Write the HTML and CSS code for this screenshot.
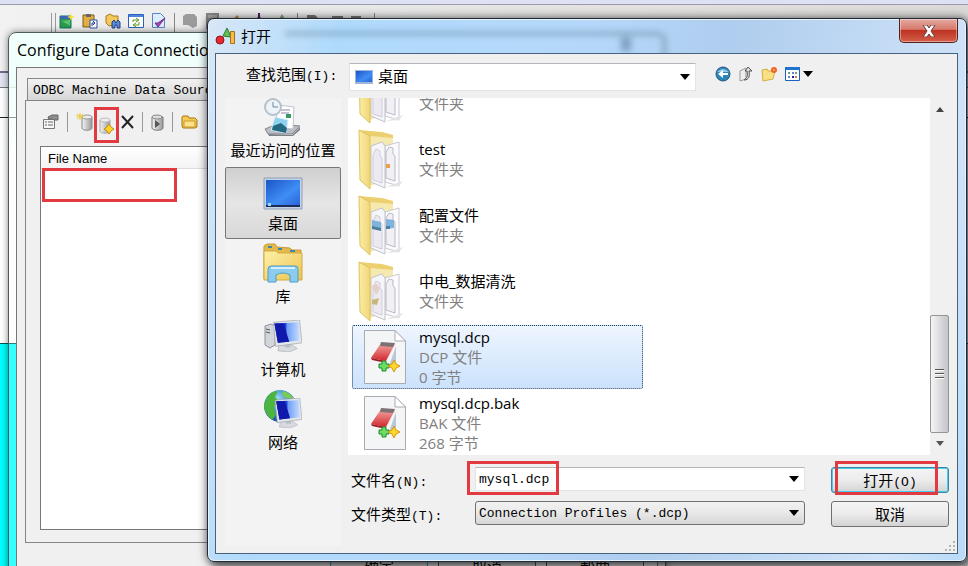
FILE: index.html
```
<!DOCTYPE html>
<html lang="zh-CN">

<head>
  <meta charset="utf-8" />
  <title>打开</title>
  <link rel="stylesheet" href="styles.css">
</head>

<body>
  <svg width="0" height="0" class="defs">
    <defs>
      <linearGradient id="gYellow" x1="0" y1="0" x2="1" y2="1">
        <stop offset="0" stop-color="#fff2ab" />
        <stop offset="1" stop-color="#ebc34e" />
      </linearGradient>
      <linearGradient id="gFlap" x1="0" y1="0" x2="1" y2="0">
        <stop offset="0" stop-color="#fbeea6" />
        <stop offset="1" stop-color="#f0d678" />
      </linearGradient>
      <linearGradient id="gBlue" x1="0" y1="0" x2="1" y2="1">
        <stop offset="0" stop-color="#1b55c8" />
        <stop offset=".6" stop-color="#3f8df5" />
        <stop offset="1" stop-color="#2a63d8" />
      </linearGradient>
      <linearGradient id="gScreen" x1="0" y1="0" x2="1" y2="0">
        <stop offset="0" stop-color="#1018b0" />
        <stop offset=".45" stop-color="#1a3fdc" />
        <stop offset=".5" stop-color="#6f9df5" />
        <stop offset="1" stop-color="#c4dcff" />
      </linearGradient>
      <linearGradient id="gRed" x1="0" y1="0" x2="0" y2="1">
        <stop offset="0" stop-color="#f2aaa6" />
        <stop offset="1" stop-color="#d3262b" />
      </linearGradient>
      <linearGradient id="gGrey" x1="0" y1="0" x2="1" y2="0">
        <stop offset="0" stop-color="#f4f4f4" />
        <stop offset="1" stop-color="#999" />
      </linearGradient>
      <radialGradient id="gGlobe" cx=".4" cy=".3" r=".8">
        <stop offset="0" stop-color="#a8e2fa" />
        <stop offset=".5" stop-color="#3489d2" />
        <stop offset="1" stop-color="#0b3a80" />
      </radialGradient>
      <symbol id="folder" viewBox="0 0 46 62">
        <path d="M1 2L24 4L35 7V17L12 15z" fill="#ecd06f" />
        <path d="M12 8L35 10V50L12 58z" fill="#f6e9b0" />
        <path d="M27 18L41 14V58L27 54z" fill="#fbfbfd" stroke="#c9c9d2" />
        <path d="M28 50V24l3-5 4 1v6l2 2v25z" fill="#f0f0f5" stroke="#bbbbc8" />
        <path d="M13 18L24 14L27 18V60L13 54z" fill="#f6f6fa" stroke="#c2c2cc" />
        <path d="M15 52V27l3-6 4 2v5l2 2v25z" fill="#eceaf0" stroke="#cfccd8" />
        <path d="M1 2L12 8V61L2 52z" fill="url(#gFlap)" stroke="#dfc25d" />
        <path d="M28 59L45 53L41 58z" fill="#e3e3e3" />
      </symbol>
      <symbol id="dcp" viewBox="0 0 42 54">
        <path d="M.5.5H31L41.500 11V53.500H.5z" fill="#f4f5f6" stroke="#a8acb2" />
        <path d="M31 .5V11H41.500z" fill="#fff" stroke="#a8acb2" />
        <path d="M26 33L32 16V32L24 38z" fill="#b9c8d8" />
        <path d="M17 13L31 14L22 31L7 28z" fill="url(#gRed)" />
        <path d="M17 12L31 13L29 17L16 16z" fill="#7c7276" />
        <path d="M7 28L22 31L22 33L8 30z" fill="#9d1b22" />
        <path d="M18 31h4v3h3v4h-3v3h-4v-3h-3v-4h3z" fill="#6cdc64" stroke="#188c25" />
        <path d="M30 30l2 4 4 2-4 2-2 4-2-4-4-2 4-2z" fill="#ffd52e" stroke="#d59a0b" />
      </symbol>
      <symbol id="arrow" viewBox="0 0 10 6">
        <path d="M0 0H10L5 6z" />
      </symbol>
      <symbol id="monitor" viewBox="0 0 26 28">
        <path d="M6 22l10-1 6 4-7 3-10-1z" fill="#d7dbe0" stroke="#a5a9b0" stroke-width=".5" />
        <path d="M11 18h5v6h-5z" fill="#babfc6" />
        <path d="M1 2L24 0L26 20L3 23z" fill="#e3e6ea" stroke="#9ea5ad" stroke-width=".6" />
        <path d="M2 3L23 2L24 18L5 20z" fill="url(#gScreen)" />
        <path d="M2 3L10 3L15 19L5 20z" fill="#1119ab" />
      </symbol>
    </defs>
  </svg>

  <!-- 后面的主程序 -->
  <div class="app">
    <div class="menubar"></div>
    <div class="toolbar">
      <svg width="16" height="16" viewBox="0 0 16 16"><path d="M1 3h11v12H1z" fill="#2c9a49" stroke="#176" /><path d="M1 3h11v3H1z" fill="#3a66b5" /><path d="M3 8l8 5V7z" fill="#5cc26b" /><path d="M12 0l1 3 3 1-3 1-1 3-1-3-3-1 3-1z" fill="#ffdf35" /></svg>
      <svg width="16" height="16" viewBox="0 0 16 16"><path d="M1 2h11v12H1z" fill="#e2ae3f" stroke="#7e5b18" /><path d="M4 1h5v3H4z" fill="#666" /><path d="M8 7h7v8H8z" fill="#fff" stroke="#2d4fa0" /><path d="M10 13V10h3M11 8l2 2-2 2" fill="none" stroke="#2040a0" /></svg>
      <svg width="16" height="16" viewBox="0 0 16 16"><path d="M1 3l4-2 3 2h5v8l-9 2-3-3z" fill="#f3c95d" stroke="#a57a20" /><path d="M7 9l2-2 2 3 2-3 2 2v6h-3v-3h-2v3H7z" fill="#5d8dd8" stroke="#1e3f88" /></svg>
      <svg width="16" height="16" viewBox="0 0 16 16"><path d="M.5 1.500h15v13H.5z" fill="#fff" stroke="#2d62bd" /><path d="M1 2h14v2H1z" fill="#4b83dd" /><path d="M5 9V7h5M8 5l3 2-3 2M11 9v3H6M8 10l-3 2 3 2" fill="none" stroke="#5f9b1c" /></svg>
      <svg width="16" height="16" viewBox="0 0 16 16"><path d="M1.500.5h8l4 4v10h-12z" fill="#ddedff" stroke="#5b86c6" /><path d="M4 10l3 4 7-9-7 5z" fill="#a34bb8" stroke="#713087" /></svg>
      <i class="bar-line"></i>
      <svg width="16" height="16" viewBox="0 0 16 16"><path d="M1 3l3-2h8l3 3v9l-4 2-5-3H1z" fill="#9b9b9b" /></svg>
      <svg width="16" height="16" viewBox="0 0 16 16"><path d="M1 0h13v16H1z" fill="#888" /><path d="M3 2h9v3H3z" fill="#aaa" /></svg>
      <svg width="16" height="16" viewBox="0 0 16 16"><path d="M2 10L9 2l2 2-7 8z" fill="#b39442" /></svg>
      <svg width="16" height="16" viewBox="0 0 16 16"><path d="M7 0h2v4l3 3H4l3-3z" fill="#425" /></svg>
      <svg width="16" height="16" viewBox="0 0 16 16"><path d="M8 1l5 8H3z" fill="#7fa583" /></svg>
      <i class="bar-line"></i>
      <svg width="16" height="16" viewBox="0 0 16 16"><path d="M2 2h8l4 4v5H2z" fill="#77736f" /></svg>
      <svg width="16" height="16" viewBox="0 0 16 16"><path d="M4 3h11v3H4z" fill="#77736f" /></svg>
      <svg width="16" height="16" viewBox="0 0 16 16"><path d="M0 3h10v3H0z" fill="#77736f" /></svg>
      <i class="bar-line"></i>
    </div>
    <div class="band"></div>
    <div class="sheet"></div>
    <div class="canvas"></div>
  </div>

  <!-- Configure Data Connections -->
  <div class="win config">
    <div class="config-title">Configure Data Connections</div>
    <div class="config-client">
      <div class="tabs">ODBC Machine Data Sources</div>
      <div class="pane">
        <div class="tools">
          <svg width="17" height="16" viewBox="0 0 17 16"><path d="M1.500 5.500h11v9h-11z" fill="#f7f7f7" stroke="#777" /><path d="M3 8h2M6 8h5M3 11h2M6 11h5" stroke="#666" /><path d="M6 3l4-2h6v5h-4L9 4 7 6z" fill="#8d8d8d" stroke="#666" /></svg>
          <i class="sep"></i>
          <svg width="17" height="18" viewBox="0 0 17 18"><path d="M6 4v11c0 3 10 3 10 0V4z" fill="url(#gGrey)" stroke="#888" /><ellipse cx="11" cy="4" rx="5" ry="2" fill="#eee" stroke="#999" /><path d="M4 0v7M0 3h8M1 1l6 5M7 1L1 6" stroke="#efc735" /></svg>
          <span class="marked">
            <svg width="17" height="18" viewBox="0 0 17 18"><path d="M2 4v11c0 3 10 3 10 0V4z" fill="url(#gGrey)" stroke="#aaa" /><ellipse cx="7" cy="4" rx="5" ry="2" fill="#eee" stroke="#bbb" /><path d="M11 8l2 3 3 2-3 2-2 3-2-3-3-2 3-2z" fill="#ffd42b" stroke="#c58a12" /></svg>
          </span>
          <svg width="13" height="14" viewBox="0 0 13 14"><path d="M1 1l11 12M12 1L1 13" stroke="#222" stroke-width="2" /></svg>
          <i class="sep"></i>
          <svg width="13" height="17" viewBox="0 0 13 17"><path d="M1 3v11c0 3 11 3 11 0V3z" fill="url(#gGrey)" stroke="#777" /><ellipse cx="6" cy="3" rx="5" ry="2" fill="#ddd" stroke="#888" /><path d="M4 6l5 4-5 4z" fill="#555" /></svg>
          <i class="sep"></i>
          <svg width="17" height="14" viewBox="0 0 17 14"><path d="M1 2l1-1h5l1 2h6l2 2v7l-2 1H2L1 11z" fill="#f5cb52" stroke="#a77712" /><path d="M3 6h11v6H3z" fill="#fde28a" stroke="#c79a30" /></svg>
        </div>
        <div class="filebox">
          <div class="filebox-head">File Name</div>
          <div class="filebox-mark"></div>
        </div>
      </div>
    </div>
    <div class="config-foot">
      <button type="button" class="default">确定</button>
      <button type="button">取消</button>
      <button type="button">帮助</button>
    </div>
  </div>

  <!-- 打开 -->
  <div class="win open">
    <div class="titlebar">
      <svg width="20" height="18" viewBox="0 0 20 18"><path d="M8 9l4-8 4 9z" fill="#63bf57" stroke="#2b7d2c" /><path d="M15.500 4.500h4v12h-4z" fill="#f4bd4e" stroke="#a97213" /><circle cx="5" cy="13" r="4" fill="#e12b31" stroke="#971017" /></svg>
      <span>打开</span>
      <button type="button" class="close" aria-label="关闭">
        <svg width="14" height="12" viewBox="0 0 14 12"><path d="M1 0H5L7 3L9 0H13L9 6L13 12H9L7 9L5 12H1L5 6z" fill="#fff" stroke="#6b3a3a" /></svg>
      </button>
    </div>
    <div class="client">
      <div class="lookin">
        <label for="lookin">查找范围<span class="mono">(I):</span></label>
        <div class="combo white">
          <svg class="combo-icon" width="18" height="14" viewBox="0 0 18 14"><path d="M0 0h18v14H0z" fill="#9fb6d6" /><path d="M1 1h16v11H1z" fill="url(#gBlue)" /></svg>
          <select id="lookin">
            <option>桌面</option>
          </select>
          <svg class="combo-arrow" width="10" height="6"><use href="#arrow" /></svg>
        </div>
        <div class="nav">
          <svg width="16" height="16" viewBox="0 0 16 16"><circle cx="8" cy="8" r="7" fill="#2d86b8" stroke="#28567e" /><path d="M2 6q6-6 12 0" fill="#8bc8e4" /><path d="M3 8l5-4v3h5v2H8v3z" fill="#fff" /></svg>
          <svg width="16" height="16" viewBox="0 0 16 16"><path d="M2 5l6-3v11l-6 2z" fill="#eee" stroke="#999" /><path d="M6 14c5 0 6-4 5-9h3L10 1 7 5h2c1 5 0 7-3 9z" fill="#ddd" stroke="#555" /></svg>
          <svg width="17" height="16" viewBox="0 0 17 16"><path d="M1 4l5-1 1 2h7l-2 8-10 2z" fill="#f8e087" stroke="#d9ad3c" /><circle cx="13" cy="4" r="2" fill="#ffb44a" stroke="#ee642b" stroke-width="2" /></svg>
          <div class="view">
            <svg width="15" height="14" viewBox="0 0 15 14"><path d="M.5.5h14v13H.5z" fill="#fff" stroke="#1763bd" /><path d="M0 0h15v3H0z" fill="#1f74d0" /><path d="M3 5h2v2H3zM10 5h2v2h-2z" fill="#7a9c7e" /><path d="M7 5h2v2H7zM3 9h2v2H3z" fill="#5a88d6" /><path d="M7 9h2v2H7z" fill="#23238b" /><path d="M10 9h2v2h-2z" fill="#d37b4f" /></svg>
            <svg width="10" height="6"><use href="#arrow" /></svg>
          </div>
        </div>
      </div>

      <div class="main">
        <div class="places">
          <button type="button">
            <svg width="40" height="40" viewBox="0 0 40 40"><path d="M2 32l12-5 23 2-8 8-24 0z" fill="#b9bec4" stroke="#858a90" /><path d="M5 37l24 1 8-8v3l-7 6H6z" fill="#7c8187" /><path d="M15 8l16 2-1 22-18-2z" fill="#fff" stroke="#c0c6cc" /><path d="M18 13h9M18 16h8" stroke="#88a" /><path d="M23 17h5v4h-5z" fill="#396" /><path d="M12 20l13 3-2 13-15-3z" fill="#8fd0ef" stroke="#d9eef8" /><path d="M10 29l8-3 6 5-1 5-14-3z" fill="#23697f" /><circle cx="10" cy="10" r="8" fill="#edf3f7" stroke="#b5c1cb" stroke-width="2" /><path d="M10 5v5h5" fill="none" stroke="#6e8798" /></svg>
            <span>最近访问的位置</span>
          </button>
          <button type="button" class="active">
            <svg width="40" height="36" viewBox="0 0 40 36"><path d="M1 4h38v31H1z" fill="#c3d3e8" stroke="#8e9fb6" /><path d="M3 6h34v25H3z" fill="url(#gBlue)" /><path d="M3 31h34v2H3z" fill="#1b2c55" /><path d="M5 29h3v3H5z" fill="#9fd5f8" /></svg>
            <span>桌面</span>
          </button>
          <button type="button">
            <svg width="40" height="40" viewBox="0 0 40 40"><path d="M1 3l3-2h8l2 3 13 1 2 2h9v29H1z" fill="#e3b94b" stroke="#c79b33" /><path d="M1 8h12l2 2h24v27H1z" fill="url(#gYellow)" stroke="#d1aa42" /><path d="M5 4h4M15 6h4M27 8h5" stroke="#3b87b0" stroke-width="2" /><path d="M5 39V26q0-3 3-3h24q3 0 3 3v13h-8v-7q-7-4-14 0v7z" fill="#8bcbed" stroke="#4c9cc9" /><path d="M8 25h24" stroke="#d3effc" stroke-width="2" /></svg>
            <span>库</span>
          </button>
          <button type="button">
            <svg width="40" height="40" viewBox="0 0 40 40"><path d="M2 10l6-2 4 2v19l-5 3-5-3z" fill="#d2d5da" stroke="#8e939a" /><path d="M3 13l4 1M3 16l4 1" stroke="#555" /><use href="#monitor" x="9" y="4" width="30" height="32" /></svg>
            <span>计算机</span>
          </button>
          <button type="button">
            <svg width="40" height="40" viewBox="0 0 40 40"><circle cx="17" cy="17" r="16" fill="url(#gGlobe)" /><path d="M4 8q5-7 11-6l-3 6 4 4-5 6 2 8-4 5Q1 24 1 16z" fill="#4db43f" /><path d="M20 2q8 2 11 8l-8-1-4-3z" fill="#7acb53" /><use href="#monitor" x="11" y="9" width="28" height="30" /></svg>
            <span>网络</span>
          </button>
        </div>

        <div class="right">
          <div class="listwrap">
            <ul class="list">
              <li>
                <svg width="46" height="62"><use href="#folder" /></svg>
                <div><p>config</p><p class="sub">文件夹</p></div>
              </li>
              <li>
                <svg width="46" height="62" viewBox="0 0 46 62"><use href="#folder" /><path d="M28 36h4v4h-4z" fill="#e8a04a" /></svg>
                <div><p>test</p><p class="sub">文件夹</p></div>
              </li>
              <li>
                <svg width="46" height="62" viewBox="0 0 46 62"><use href="#folder" /><path d="M14 26l9 2v8l-9-2zM28 25l8 1v8l-8 1z" fill="#7fb2dc" /><path d="M14 32l9 2v3l-9-2zM28 32l4 0v3l-4 0z" fill="#4d7f9e" /></svg>
                <div><p>配置文件</p><p class="sub">文件夹</p></div>
              </li>
              <li>
                <svg width="46" height="62" viewBox="0 0 46 62"><use href="#folder" /><path d="M14 26l5-2 3 5-4 6z" fill="#e6cfca" /><path d="M14 40l7-2-2 7-5-1z" fill="#c9b778" /></svg>
                <div><p>中电_数据清洗</p><p class="sub">文件夹</p></div>
              </li>
              <li class="selected">
                <svg width="46" height="54"><use href="#dcp" /></svg>
                <div><p>mysql.dcp</p><p class="sub">DCP 文件</p><p class="sub">0 字节</p></div>
              </li>
              <li>
                <svg width="46" height="54"><use href="#dcp" /></svg>
                <div><p>mysql.dcp.bak</p><p class="sub">BAK 文件</p><p class="sub">268 字节</p></div>
              </li>
            </ul>
            <div class="scroll">
              <svg width="8" height="5" viewBox="0 0 8 5"><path d="M0 5H8L4 0z" fill="#444" /></svg>
              <div class="thumb"><i></i><i></i><i></i></div>
              <svg width="8" height="5" viewBox="0 0 8 5"><path d="M0 0H8L4 5z" fill="#555" /></svg>
            </div>
          </div>

          <div class="form">
            <label for="fname">文件名<span class="mono">(N):</span></label>
            <div class="combo white mark-name">
              <input type="text" id="fname" value="mysql.dcp">
              <svg class="combo-arrow" width="10" height="6"><use href="#arrow" /></svg>
            </div>
            <div class="mark-open"><button type="button" class="btn default">打开<span class="mono">(O)</span></button></div>
            <label for="ftype">文件类型<span class="mono">(T):</span></label>
            <div class="combo grey">
              <select id="ftype">
                <option>Connection Profiles (*.dcp)</option>
              </select>
              <svg class="combo-arrow" width="10" height="6"><use href="#arrow" /></svg>
            </div>
            <button type="button" class="btn">取消</button>
          </div>
        </div>
      </div>
      <svg class="grip" width="12" height="12" viewBox="0 0 12 12"><path d="M9 1h2v2H9zM5 5h2v2H5zM9 5h2v2H9zM1 9h2v2H1zM5 9h2v2H5zM9 9h2v2H9z" fill="#b5b5b5" /></svg>
    </div>
  </div>
</body>

</html>
```
FILE: styles.css
```
*,
*::before,
*::after {
  box-sizing: border-box;
}

html,
body {
  height: 100%;
  margin: 0;
}

body {
  position: relative;
  overflow: hidden;
  font-family: "Open Sans", "Noto Sans CJK SC", sans-serif;
  font-size: 15px;
  line-height: 20px;
  color: #000;
}

p,
ul {
  margin: 0;
  padding: 0;
}

svg {
  display: block;
  flex: none;
}

button,
input,
select {
  font: inherit;
  color: inherit;
  margin: 0;
}

.defs {
  position: absolute;
}

.mono {
  font-family: "Liberation Mono", monospace;
  font-size: 13px;
  line-height: 1;
}

/* 主程序 */
.app {
  height: 100%;
  display: flex;
  flex-direction: column;
  background: #f0f0f0;
}

.menubar {
  height: 5px;
  background: #dde1f3;
  border-bottom: 1px solid #9a9cae;
}

.toolbar {
  height: 66px;
  padding: 8px 0 0 51px;
  display: flex;
  gap: 7px;
  background: linear-gradient(90deg, #f2f2f2, #ececec 200px, #dcdad8);
}

.toolbar::before {
  content: "";
  width: 5px;
  margin-right: -4px;
  height: 26px;
  border-left: 1px solid #999;
  border-right: 1px solid #999;
}

.toolbar svg,
.toolbar .bar-line {
  flex: none;
}

.bar-line {
  width: 1px;
  height: 22px;
  background: #8a8583;
}

.band {
  height: 17px;
  border-top: 2px solid #6f6e8c;
  border-bottom: 1px solid #777;
  background: #e3e5f2;
}

.sheet {
  height: 255px;
  background: linear-gradient(#fff 29px, #222 29px, #222 30px, #fff 30px);
}

.canvas {
  flex: 1;
  border-top: 1px solid #055;
  background: linear-gradient(90deg, #0ff 200px, #ddd 200px);
}

/* 窗口 */
.win {
  position: absolute;
  display: flex;
  flex-direction: column;
}

.config {
  left: 8px;
  top: 32px;
  right: 302px;
  bottom: -20px;
  border: 1px solid #4c5c5c;
  border-radius: 8px 8px 0 0;
  padding: 0 8px;
  background: linear-gradient(#f0fffc 40px, rgba(255, 255, 255, .2) 120px);
  box-shadow: 0 0 7px rgba(0, 0, 0, .5);
}

.config-title {
  height: 34px;
  font-size: 16px;
  line-height: 34px;
  white-space: nowrap;
}

.config-client {
  flex: 1;
  display: flex;
  flex-direction: column;
  margin: 0 -1px;
  padding: 10px 9px 0 8px;
  border: 1px solid #777;
  border-bottom: 0;
  background: #f0f0f0;
}

.tabs {
  width: 240px;
  height: 22px;
  margin-left: 2px;
  padding-left: 5px;
  border: 1px solid #888;
  border-bottom: 0;
  background: linear-gradient(#f2f2f2, #d6d6d6);
  font: 13px/24px "Liberation Mono", monospace;
  white-space: nowrap;
}

.pane {
  flex: 1;
  display: flex;
  flex-direction: column;
  padding: 0 12px 12px 14px;
  border: 1px solid #858585;
}

.tools {
  display: flex;
  align-items: center;
  height: 42px;
  margin-bottom: 3px;
  padding-left: 2px;
  gap: 6px;
}

.sep {
  width: 1px;
  height: 20px;
  margin: 0 2px;
  background: #999;
}

.marked {
  display: flex;
  align-items: center;
  justify-content: center;
  width: 25px;
  height: 36px;
  margin: 6px -4px 0 -5px;
  border: 3px solid #e23a41;
}

.filebox {
  flex: 1;
  border: 1px solid #777;
  background: #fff;
}

.filebox-head {
  height: 22px;
  padding-left: 7px;
  border-bottom: 1px solid #ddd;
  background: linear-gradient(#fff, #f4f4f4);
  font: 13px/24px "Liberation Sans", sans-serif;
}

.filebox-mark {
  width: 135px;
  height: 34px;
  margin-left: 1px;
  margin-top: -1px;
  border: 3px solid #e23a41;
}

.config-foot {
  display: flex;
  gap: 10px;
  height: 42px;
  margin: 0 -1px;
  padding: 10px 20px 0 313px;
  border: 1px solid #777;
  border-width: 0 1px;
  background: #f0f0f0;
}

.config-foot button {
  flex: none;
  width: 98px;
  height: 26px;
  padding: 0;
  border: 1px solid #555;
  border-radius: 3px;
  background: #e8e8e8;
}

.config-foot .default {
  border-color: #3a9cc4;
}

.open {
  left: 207px;
  top: 18px;
  right: 1px;
  bottom: 4px;
  padding: 0 8px 7px 7px;
  border: 1px solid #1e2a38;
  border-radius: 7px;
  background: linear-gradient(100deg, #d8e7f6, #b0dafc 130px, #b5d8fa 380px, #afcdee 520px, #cfe3f8 760px, #b9daf9);
  box-shadow: inset 0 0 0 1px #e6f3ff, 0 0 8px 1px rgba(0, 0, 0, .5), 4px 6px 8px rgba(0, 0, 0, .5);
}

.titlebar {
  position: relative;
  height: 34px;
  display: flex;
  align-items: center;
  gap: 6px;
  overflow: hidden;
}

/* 玻璃标题栏透出的后面窗口 */
.titlebar::before {
  content: "";
  position: absolute;
  left: 70px;
  right: 292px;
  top: 13px;
  height: 60px;
  border: 3px solid rgba(60, 95, 115, .5);
  border-left: 0;
  border-radius: 0 9px 0 0;
  filter: blur(3px);
}

.titlebar::after {
  content: "";
  position: absolute;
  right: 327px;
  top: 18px;
  width: 10px;
  height: 14px;
  background: rgba(60, 95, 130, .45);
  filter: blur(3px);
}

.close {
  align-self: flex-start;
  display: flex;
  align-items: center;
  justify-content: center;
  width: 59px;
  height: 24px;
  margin-left: auto;
  border: 1px solid #54211f;
  border-top: 0;
  border-radius: 0 0 5px 5px;
  background: linear-gradient(#e5aaa0, #d6796b 45%, #bd3321 50%, #d5604a);
  box-shadow: inset 0 0 0 1px rgba(255, 255, 255, .4);
}

.client {
  position: relative;
  flex: 1;
  min-height: 0;
  display: flex;
  flex-direction: column;
  padding: 9px 8px 7px 9px;
  border: 1px solid #47617e;
  background: #f0f0f0;
}

.lookin {
  display: flex;
  height: 35px;
  padding-left: 21px;
}

.lookin label {
  width: 103px;
  line-height: 22px;
  white-space: nowrap;
}

.combo {
  position: relative;
  height: 24px;
}

.lookin .combo {
  flex: 0 1 347px;
  height: 28px;
}

.combo select,
.combo input {
  display: block;
  width: 100%;
  height: 100%;
  padding: 0 24px 0 3px;
  border: 0;
  outline: 0;
  appearance: none;
  background: none;
}

.lookin select {
  padding: 0 24px 2px 28px;
}

.form .combo select,
.form .combo input {
  font: 13px "Liberation Mono", monospace;
}

.white {
  background: #fff;
  border: 1px solid #e1e3e8;
  border-top-color: #b4b7be;
}

.grey {
  border: 1px solid #707070;
  border-radius: 3px;
  background: linear-gradient(#f2f2f2, #e8e8e8 50%, #d6d6d6);
}

.combo-icon {
  position: absolute;
  left: 5px;
  top: 6px;
}

.combo-arrow {
  position: absolute;
  right: 5px;
  top: 50%;
  margin-top: -3px;
  pointer-events: none;
}

.nav {
  display: flex;
  gap: 7px;
  margin-left: 19px;
  padding-top: 3px;
}

.view {
  display: flex;
  align-items: center;
  gap: 3px;
  height: 16px;
}

.main {
  flex: 1;
  min-height: 0;
  display: flex;
  gap: 7px;
}

.places {
  flex: none;
  width: 116px;
  background: #f3f3f3;
}

.places button {
  display: flex;
  flex-direction: column;
  align-items: center;
  justify-content: flex-end;
  width: 100%;
  height: 73px;
  padding: 0 0 5px;
  border: 1px solid transparent;
  background: none;
  white-space: nowrap;
}

.places button:first-child {
  height: 69px;
  padding-bottom: 6px;
}

.places svg {
  margin-bottom: 3px;
}

.places .active {
  border-color: #777;
  border-radius: 2px;
  height: 72px;
  background: linear-gradient(#cfcfcf, #e6e6e6 50%, #d8d8d8);
}

.right {
  flex: 1;
  min-width: 0;
  display: flex;
  flex-direction: column;
}

.listwrap {
  flex: 1;
  min-height: 0;
  display: flex;
}

.list {
  flex: 1;
  display: flex;
  flex-direction: column;
  justify-content: flex-end;
  gap: 2px;
  padding: 0 4px;
  overflow: hidden;
  background: #fff;
  list-style: none;
}

.list li {
  flex: none;
  display: flex;
  align-items: center;
  gap: 11px;
  width: 291px;
  height: 64px;
  padding-left: 9px;
  border: 1px dotted transparent;
  border-radius: 2px;
}

.list li > svg[height="62"] {
  margin: 0 4px 0 -4px;
}

.list .selected {
  border-color: #1b3a5e;
  background: linear-gradient(#eef5fe, #cbe2fd);
}

.sub {
  color: #808080;
}

.scroll {
  flex: none;
  width: 19px;
  display: flex;
  flex-direction: column;
  align-items: center;
  padding: 9px 0;
  background: #f0f0f0;
}

.thumb {
  display: flex;
  flex-direction: column;
  align-items: center;
  justify-content: center;
  gap: 2px;
  width: 19px;
  height: 118px;
  margin-top: auto;
  margin-bottom: 8px;
  border: 1px solid #959595;
  border-radius: 2px;
  background: linear-gradient(90deg, #f5f5f5, #dcdcdf 50%, #c4c4c9);
}

.thumb i {
  width: 9px;
  height: 2px;
  border-top: 1px solid #555;
  background: #fff;
}

.form {
  display: grid;
  grid-template-columns: 124px 1fr 118px;
  grid-auto-rows: 26px;
  row-gap: 8px;
  padding: 12px 0 19px 3px;
}

.form label {
  line-height: 26px;
  white-space: nowrap;
}

.form .combo {
  margin-right: 26px;
}

.mark-name::after {
  content: "";
  position: absolute;
  left: -9px;
  top: -7px;
  width: 92px;
  height: 34px;
  border: 3px solid #e23a41;
  pointer-events: none;
}

.btn {
  width: 100%;
  height: 26px;
  padding: 0;
  border: 1px solid #707070;
  border-radius: 3px;
  background: linear-gradient(#f4f4f4, #ececec 50%, #d3d3d3);
  line-height: 22px;
}

.btn.default {
  border-color: #3a86a3;
  box-shadow: inset 0 0 0 1px #49cdee;
}

.mark-open {
  position: relative;
  display: flex;
}

.mark-open::after {
  content: "";
  position: absolute;
  left: 4px;
  top: -6px;
  width: 103px;
  height: 34px;
  border: 3px solid #e23a41;
  pointer-events: none;
}

.grip {
  position: absolute;
  right: 1px;
  bottom: 1px;
}
```
